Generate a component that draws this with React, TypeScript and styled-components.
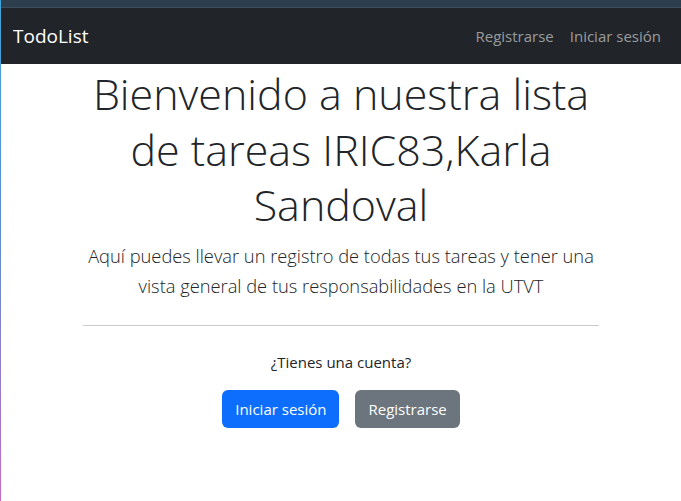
import React from "react";
import styled, { createGlobalStyle } from "styled-components";

const Global = createGlobalStyle`
  html, body { margin: 0; padding: 0; background: #fff; }
  body {
    font-family: "Open Sans", "Noto Sans", "Liberation Sans", sans-serif;
    color: #212529;
    font-size: 16px;
    line-height: 1.5;
  }
  * { box-sizing: border-box; }
`;

const Frame = styled.div`
  min-height: 501px;
  border-left: 1px solid;
  border-image: linear-gradient(180deg, #3ea6dc 0%, #5a8fd0 45%, #c56cc4 100%) 1;
`;

const TopStrip = styled.div`
  height: 8px;
  background: #2d3e4e;
  border-bottom: 1px solid #3c4e5e;
`;

const Navbar = styled.nav`
  height: 56px;
  background: #212529;
  display: flex;
  align-items: center;
  justify-content: space-between;
  padding: 0 12px;
`;

const Brand = styled.a`
  color: #fff;
  font-size: 19px;
  text-decoration: none;
  line-height: 30px;
`;

const NavLinks = styled.div`
  display: flex;
`;

const NavLink = styled.a`
  color: rgba(255, 255, 255, 0.55);
  font-size: 15px;
  padding: 8px;
  text-decoration: none;
`;

const Container = styled.main`
  max-width: 540px;
  margin: 0 auto;
  padding: 0 12px;
  text-align: center;
`;

const Title = styled.h1`
  margin: 2px 0 8px;
  font-size: 43px;
  font-weight: 300;
  line-height: 55.5px;
`;

const Lead = styled.p`
  margin: 0;
  font-size: 18.3px;
  font-weight: 300;
  line-height: 30px;
`;

const Rule = styled.hr`
  margin: 24px 0;
  border: 0;
  border-top: 1px solid #c9cacb;
`;

const Question = styled.p`
  margin: 0 0 16px;
  font-size: 15px;
  line-height: 24px;
`;

const Actions = styled.div`
  display: flex;
  justify-content: center;
  gap: 16px;
`;

const Button = styled.button<{ $variant: "primary" | "secondary" }>`
  font-family: inherit;
  font-size: 15px;
  line-height: 24px;
  padding: 6px 12px;
  border: 1px solid transparent;
  border-radius: 6px;
  color: #fff;
  background: ${(p) => (p.$variant === "primary" ? "#0d6efd" : "#6c757d")};
  cursor: pointer;
`;

export default function App() {
  return (
    <>
      <Global />
      <Frame>
        <TopStrip />
        <Navbar>
          <Brand href="#">TodoList</Brand>
          <NavLinks>
            <NavLink href="#">Registrarse</NavLink>
            <NavLink href="#">Iniciar sesión</NavLink>
          </NavLinks>
        </Navbar>
        <Container>
          <Title>Bienvenido a nuestra lista de tareas IRIC83,Karla Sandoval</Title>
          <Lead>
            Aquí puedes llevar un registro de todas tus tareas y tener una vista general de tus
            responsabilidades en la UTVT
          </Lead>
          <Rule />
          <Question>¿Tienes una cuenta?</Question>
          <Actions>
            <Button $variant="primary">Iniciar sesión</Button>
            <Button $variant="secondary">Registrarse</Button>
          </Actions>
        </Container>
      </Frame>
    </>
  );
}
